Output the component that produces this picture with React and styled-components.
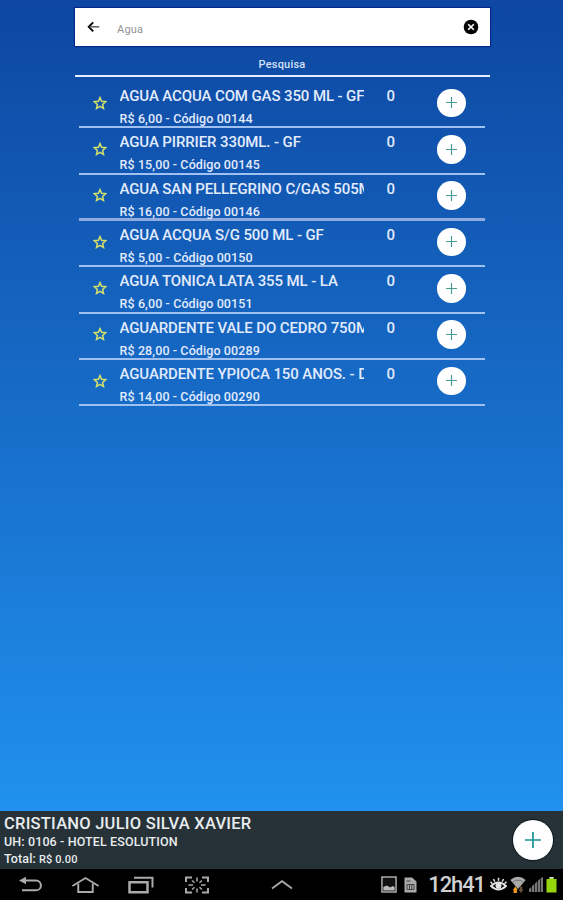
import styled, { createGlobalStyle } from 'styled-components';

const products = [
  { name: 'AGUA ACQUA COM GAS 350 ML - GF', price: '6,00', code: '00144' },
  { name: 'AGUA PIRRIER 330ML. - GF', price: '15,00', code: '00145' },
  { name: 'AGUA SAN PELLEGRINO C/GAS 505ML', price: '16,00', code: '00146', strong: true },
  { name: 'AGUA ACQUA S/G 500 ML - GF', price: '5,00', code: '00150' },
  { name: 'AGUA TONICA LATA 355 ML - LA', price: '6,00', code: '00151' },
  { name: 'AGUARDENTE VALE DO CEDRO 750ML', price: '28,00', code: '00289' },
  { name: 'AGUARDENTE YPIOCA 150 ANOS. - DS', price: '14,00', code: '00290' },
];

const BackArrow = () => (
  <svg width="14" height="14" viewBox="0 0 14 14" fill="none">
    <path d="M6.2 2.3 1.7 6.8l4.5 4.5" stroke="#000" strokeWidth="1.9" />
    <path d="M2.5 6.8h9.7" stroke="#666" strokeWidth="1.6" />
  </svg>
);

const ClearIcon = () => (
  <svg width="16" height="16" viewBox="0 0 16 16">
    <circle cx="8" cy="8" r="7.3" fill="#050505" />
    <path d="m5.2 5.2 5.6 5.6m0-5.6-5.6 5.6" stroke="#fff" strokeWidth="1.6" />
  </svg>
);

const Star = () => (
  <svg width="14" height="14" viewBox="0 0 14 14">
    <path
      d="m7 1.6 1.6 3.7 4 .4-3 2.7.9 4L7 10.3l-3.5 2.1.9-4-3-2.7 4-.4Z"
      fill="none"
      stroke="#d3e06a"
      strokeWidth="1.5"
    />
  </svg>
);

const Plus = ({ size, color }) => (
  <svg width={size} height={size} viewBox="0 0 16 16">
    <path d="M8 0v16M0 8h16" stroke={color} strokeWidth="1.7" />
  </svg>
);

const BackKey = () => (
  <svg width="24" height="18" viewBox="0 0 24 18" fill="none">
    <path d="M5 4.5h13a4.3 4.3 0 0 1 0 9.8H4" stroke="#aaa" strokeWidth="2" />
    <path d="M1 4.5 8 .8v7.4Z" fill="#aaa" />
  </svg>
);

const HomeKey = () => (
  <svg width="29" height="18" viewBox="0 0 30 18" fill="none" stroke="#aaa" strokeWidth="2">
    <path d="M1.5 10 15 1.8 28.5 10" />
    <path d="M7.5 7.5v8.7h15V7.5" />
  </svg>
);

const RecentKey = () => (
  <svg width="27" height="18" viewBox="0 0 27 18" fill="none" stroke="#aaa" strokeWidth="2">
    <path d="M1.5 6.2h18v10h-18Z" strokeWidth="2.5" />
    <path d="M6 1.8h18.5v9.7" />
  </svg>
);

const CaptureKey = () => (
  <svg width="26" height="18" viewBox="0 0 26 18" fill="none" stroke="#aaa" strokeWidth="2">
    <path d="M2 6V1.5h6M18 1.5h6V6M24 12v4.5h-6M8 16.5H2V12" />
    <path
      d="M13 1.5v4M13 12.5v4M4.5 9H9M17 9h4.5M8 4.5l2.5 2.2M18 4.5l-2.5 2.2M8 13.5l2.5-2.2M18 13.5l-2.5-2.2"
      strokeWidth="1.5"
    />
  </svg>
);

const UpKey = () => (
  <svg width="22" height="11" viewBox="0 0 22 11" fill="none">
    <path d="m1 9.5 10-7.3 10 7.3" stroke="#aaa" strokeWidth="1.8" />
  </svg>
);

const PictureIcon = () => (
  <svg width="16" height="17" viewBox="0 0 17 17" preserveAspectRatio="none">
    <path d="M1 1h15v15H1Z" fill="#111" stroke="#aaa" strokeWidth="1.6" />
    <path d="M2.5 14.5V11L6 9.5l4 2 2-1.5 2.5 1v3.5Z" fill="#bbb" />
  </svg>
);

const SimIcon = () => (
  <svg width="13" height="16" viewBox="0 0 13 16">
    <path d="M.5.5H8l4.5 4v11H.5Z" fill="#aaa" />
    <path d="M3 7.5h7v5H3ZM5.5 7.5v5M7.8 7.5v5M2.5 4h4" fill="none" stroke="#444" strokeWidth="1" />
  </svg>
);

const EyeIcon = () => (
  <svg width="17" height="16" viewBox="0 0 17 16" fill="none" stroke="#e2e2e2">
    <path d="M1 9q7.5-7 15 0-7.5 7-15 0Z" strokeWidth="1.8" />
    <circle cx="8.5" cy="8.7" r="2.6" fill="#e2e2e2" />
    <path d="M8.5.8v3M3.5 2l1.3 2.8M13.5 2l-1.3 2.8M.5 4.8l2 2M16.5 4.8l-2 2" strokeWidth="1.5" />
  </svg>
);

const WifiIcon = () => (
  <svg width="16" height="18" viewBox="0 0 16 18">
    <path d="M.3 4Q8-2.5 15.700 4L8 13Z" fill="#aaa" />
    <path d="M2.5 6.3q5.500-4.300 11 0" fill="none" stroke="#666" strokeWidth=".8" />
    <path d="M3.6 17v-3h-.7l2.500-3.800L7.700 14h-.8v3Z" fill="#f49a1c" />
    <path d="M9.800 10.500h2.400v3h1.300L11 17l-2.600-3.500h1.400Z" fill="#69523c" />
  </svg>
);

const SignalIcon = () => (
  <svg width="14" height="15" viewBox="0 0 14 15">
    <path d="M0 15v-3l2.300-2v5ZM3 15V9.300L5.300 7v8ZM6 15V6.500l2.300-2.300V15ZM9 15V3.700l2-2V15ZM11.700 15V1L14 0v15Z" fill="#777" />
  </svg>
);

const BatteryIcon = () => (
  <svg width="11" height="16" viewBox="0 0 11 16">
    <path d="M3.5 0h4v2h3v13.5H.5V2h3Z" fill="#94d60b" />
    <path d="M3.5 0h4v1.7h-4Z" fill="#ccd6b8" />
  </svg>
);

const App = () => (
  <Screen>
    <GlobalStyle />
    <Main>
      <SearchBar>
        <BackArrow />
        <Query>Agua</Query>
        <ClearIcon />
      </SearchBar>
      <ListHeader>Pesquisa</ListHeader>
      <List>
        {products.map((product) => (
          <Row key={product.code} $strong={product.strong}>
            <StarCell>
              <Star />
            </StarCell>
            <Info>
              <Name>{product.name}</Name>
              <Detail>
                R$ {product.price} - Código {product.code}
              </Detail>
            </Info>
            <Quantity>0</Quantity>
            <AddButton $size={28.6}>
              <Plus size={11} color="#4a9a94" />
            </AddButton>
          </Row>
        ))}
      </List>
    </Main>
    <Footer>
      <Guest>
        <GuestName>CRISTIANO JULIO SILVA XAVIER</GuestName>
        <Room>UH: 0106 - HOTEL ESOLUTION</Room>
        <Total>
          Total: <small>R$ 0.00</small>
        </Total>
      </Guest>
      <AddButton $size={40}>
        <Plus size={16} color="#169493" />
      </AddButton>
    </Footer>
    <SystemBar>
      <Keys>
        <BackKey />
        <HomeKey />
        <RecentKey />
        <CaptureKey />
      </Keys>
      <UpKey />
      <Status>
        <PictureIcon />
        <SimIcon />
        <Clock>12h41</Clock>
        <EyeIcon />
        <WifiIcon />
        <SignalIcon />
        <BatteryIcon />
      </Status>
    </SystemBar>
  </Screen>
);

export default App;

const GlobalStyle = createGlobalStyle`
  * {
    box-sizing: border-box;
  }

  body {
    margin: 0;
    font-family: Roboto, sans-serif;
    overflow: hidden;
  }

  svg {
    display: block;
    flex-shrink: 0;
  }
`;

const Screen = styled.div`
  width: 563px;
  height: 900px;
  display: flex;
  flex-direction: column;
`;

const Main = styled.main`
  flex: 1;
  padding: 7.5px 73.5px 0 74.5px;
  background: linear-gradient(#0d47a1, #2091ee);
`;

const SearchBar = styled.div`
  height: 38.5px;
  padding: 0 11px 0 12px;
  display: flex;
  align-items: center;
  background: #fff;
  box-shadow: 0 0 1px 1px #06278e;
`;

const Query = styled.div`
  flex: 1;
  padding: 5px 0 0 16.5px;
  font-size: 11px;
  letter-spacing: 0.2px;
  color: #929292;
`;

const ListHeader = styled.div`
  height: 30.5px;
  padding-top: 10.5px;
  font-size: 11px;
  font-weight: 500;
  letter-spacing: 0.2px;
  line-height: 16px;
  text-align: center;
  color: #d6e0f5;
  border-bottom: 2px solid #e6efff;
`;

const List = styled.div`
  padding: 5.5px 5px 0 4.5px;
`;

const Row = styled.div`
  height: 46.35px;
  display: flex;
  align-items: flex-start;
  border-bottom: ${({ $strong }) => ($strong ? '3px solid #91acdf' : '2px solid #9fc0f1')};
`;

const StarCell = styled.div`
  width: 40.5px;
  padding: 13.5px 0 0 13.5px;
`;

const Info = styled.div`
  width: 244px;
  overflow: hidden;
  white-space: nowrap;
  color: #e2ebfc;
`;

const Name = styled.div`
  padding-top: 4px;
  font-size: 15px;
  font-weight: 500;
  line-height: 20px;
  letter-spacing: -0.11px;
`;

const Detail = styled.div`
  padding-top: 4px;
  font-size: 12.5px;
  font-weight: 500;
  line-height: 17px;
  letter-spacing: 0.1px;
`;

const Quantity = styled.div`
  width: 54.5px;
  padding-top: 4px;
  font-size: 15px;
  font-weight: 500;
  line-height: 20px;
  text-align: center;
  color: #e2ebfc;
`;

const AddButton = styled.div`
  width: ${({ $size }) => $size}px;
  height: ${({ $size }) => $size}px;
  display: flex;
  align-items: center;
  justify-content: center;
  border-radius: 50%;
  background: #fff;

  ${Row} & {
    margin: 6.6px 0 0 19px;
  }
`;

const Footer = styled.footer`
  height: 58.5px;
  padding: 0 10.5px 0 4px;
  display: flex;
  align-items: center;
  justify-content: space-between;
  background: #263238;
  color: #e8ecee;

  ${AddButton} {
    box-shadow: 0 0 1px 1px #10181c;
  }
`;

const Guest = styled.div`
  padding-top: 3px;
  white-space: nowrap;
`;

const GuestName = styled.div`
  font-size: 16.5px;
  font-weight: 500;
  line-height: 20px;
  letter-spacing: 0.24px;
`;

const Room = styled.div`
  font-size: 12.5px;
  font-weight: 500;
  line-height: 16px;
  letter-spacing: 0.12px;
`;

const Total = styled.div`
  font-size: 12.5px;
  font-weight: 500;
  line-height: 17px;
  letter-spacing: 0.1px;

  small {
    font-size: 11px;
  }
`;

const SystemBar = styled.div`
  height: 31px;
  padding: 0 6px 0 18px;
  display: flex;
  align-items: center;
  background: #000;
`;

const Keys = styled.div`
  width: 253px;
  display: flex;
  align-items: center;
  gap: 28.5px;
`;

const Status = styled.div`
  margin-left: auto;
  display: flex;
  align-items: center;
  gap: 3px;

  svg:first-child {
    margin-right: 4px;
  }
`;

const Clock = styled.div`
  margin: 0 2px 0 8px;
  font-size: 22px;
  font-weight: 500;
  line-height: 30px;
  letter-spacing: -1.1px;
  color: #d0d0d0;
`;
